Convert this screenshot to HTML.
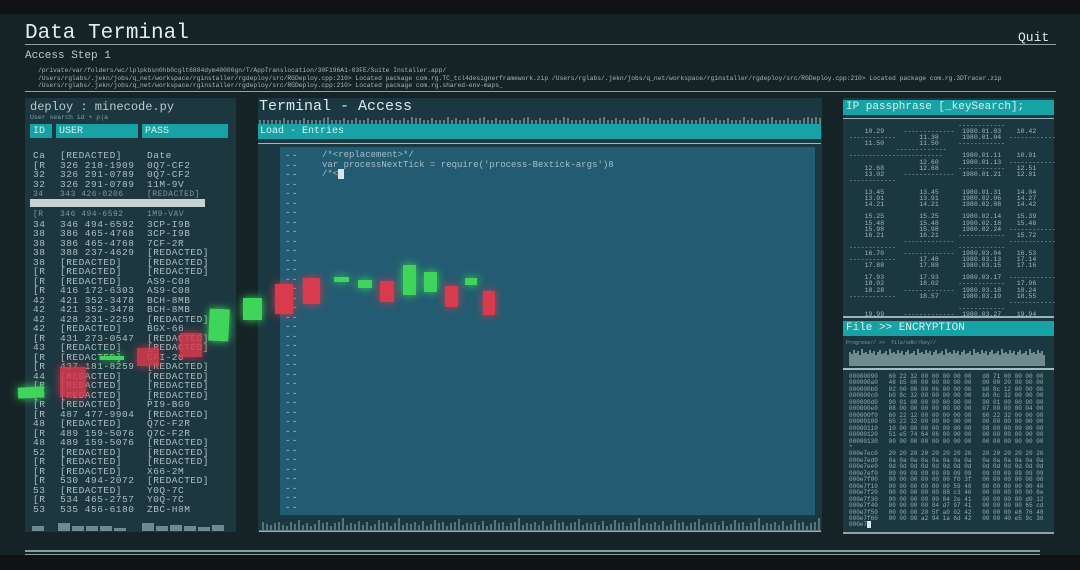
<!DOCTYPE html>
<html><head><meta charset="utf-8"><style>
*{margin:0;padding:0;box-sizing:border-box}
body{width:1080px;height:570px;overflow:hidden;background:#111213;font-family:"Liberation Mono",monospace;color:#b9c9cc;position:relative}
.a{position:absolute;white-space:pre}
#main{position:absolute;left:0;top:14px;width:1080px;height:541px;background:#152327}
.hl{position:absolute;height:1px;background:#8fa3a6}
.pan{position:absolute;background:#1c3740}
.teal{position:absolute;background:#17a3a5;color:#d8f0ef}
.c{position:absolute;box-shadow:0 0 9px currentColor}
.g{background:#3fd45a;color:#3fd45a}
.r{background:#d83a4e;color:#d83a4e}
.col{position:absolute;top:151px;font-size:9.5px;line-height:9.5px;color:#aebec1;white-space:pre;letter-spacing:0.5px}
.sm{font-size:8px;color:#7f9699}
</style></head><body>
<div id="main"></div>
<div class="a" style="left:25px;top:22px;font-size:21px;color:#e4ecec">Data Terminal</div>
<div class="hl" style="left:25px;top:44px;width:1031px"></div>
<div class="a" style="left:1018px;top:30px;font-size:13px;color:#e4ecec">Quit</div>
<div class="a" style="left:25px;top:50px;font-size:11px">Access Step 1</div>
<div class="a" style="left:38px;top:67px;font-size:6.3px;line-height:7.5px;color:#a5b6b8">/private/var/folders/wc/lplpkbsn0hb0cglt6884dym40000gn/T/AppTranslocation/30F196A1-03FE/Suite Installer.app/
/Users/rglabs/.jekn/jobs/q_net/workspace/rginstaller/rgdeploy/src/RGDeploy.cpp:210> Located package com.rg.TC_tcl4designerframework.zip /Users/rglabs/.jekn/jobs/q_net/workspace/rginstaller/rgdeploy/src/RGDeploy.cpp:210> Located package com.rg.3DTracer.zip
/Users/rglabs/.jekn/jobs/q_net/workspace/rginstaller/rgdeploy/src/RGDeploy.cpp:210> Located package com.rg.shared-env-maps_</div>
<div class="hl" style="left:25px;top:91px;width:1031px"></div>

<!-- left panel -->
<div class="pan" style="left:25px;top:98px;width:211px;height:434px"></div>
<div class="a" style="left:30px;top:100px;font-size:12px">deploy : minecode.py</div>
<div class="a" style="left:30px;top:114px;font-size:6.5px;color:#7fa0a5">User search id + p|a</div>
<div class="teal" style="left:30px;top:124px;width:22px;height:14px;font-size:10px;padding:2px 3px">ID</div>
<div class="teal" style="left:56px;top:124px;width:82px;height:14px;font-size:10px;padding:2px 3px">USER</div>
<div class="teal" style="left:142px;top:124px;width:86px;height:14px;font-size:10px;padding:2px 3px">PASS</div>
<div class="col" style="left:33px">Ca
[R
32
32
<span class="sm">34</span>

<span class="sm">[R</span>
34
38
38
38
38
[R
[R
[R
42
42
42
42
[R
43
[R
[R
44
[R
[R
[R
[R
48
[R
48
52
[R
[R
[R
53
[R
53</div>
<div class="col" style="left:60px">[REDACTED]
326 218-1909
326 291-0789
326 291-0789
<span class="sm">343 426-0206</span>

<span class="sm">346 494-6592</span>
346 494-6592
386 465-4768
386 465-4768
388 237-4629
[REDACTED]
[REDACTED]
[REDACTED]
416 172-6303
421 352-3478
421 352-3478
428 231-2259
[REDACTED]
431 273-0547
[REDACTED]
[REDACTED]
437 181-8259
[REDACTED]
[REDACTED]
[REDACTED]
[REDACTED]
487 477-9904
[REDACTED]
489 159-5076
489 159-5076
[REDACTED]
[REDACTED]
[REDACTED]
530 494-2072
[REDACTED]
534 465-2757
535 456-6180</div>
<div class="col" style="left:147px">Date
0Q7-CF2
0Q7-CF2
11M-9V
<span class="sm">[REDACTED]</span>

<span class="sm">1M9-VAV</span>
3CP-I9B
3CP-I9B
7CF-2R
[REDACTED]
[REDACTED]
[REDACTED]
AS9-C08
AS9-C08
BCH-8MB
BCH-8MB
[REDACTED]
BGX-66
[REDACTED]
[REDACTED]
CFI-20
[REDACTED]
[REDACTED]
[REDACTED]
[REDACTED]
PI9-BG9
[REDACTED]
Q7C-F2R
Q7C-F2R
[REDACTED]
[REDACTED]
[REDACTED]
X66-2M
[REDACTED]
Y0Q-7C
Y0Q-7C
ZBC-H8M</div>
<div style="position:absolute;left:30px;top:199px;width:175px;height:8px;background:#c9d2d3"></div>
<svg class="a" style="left:30px;top:520px" width="200" height="12"><g fill="#6d8a90"><rect x="2" y="6" width="12" height="5"/><rect x="28" y="3" width="12" height="8"/><rect x="42" y="6" width="12" height="5"/><rect x="56" y="6" width="12" height="5"/><rect x="70" y="6" width="12" height="5"/><rect x="84" y="8" width="12" height="3"/><rect x="112" y="3" width="12" height="8"/><rect x="126" y="6" width="12" height="5"/><rect x="140" y="5" width="12" height="6"/><rect x="154" y="6" width="12" height="5"/><rect x="168" y="7" width="12" height="4"/><rect x="182" y="5" width="12" height="6"/></g></svg>

<!-- terminal -->
<div class="pan" style="left:258px;top:98px;width:564px;height:434px;background:#1b3842"></div>
<div class="a" style="left:259px;top:98px;font-size:15px;color:#dfe8e8">Terminal - Access</div>
<svg class="a" style="left:259px;top:116px" width="562" height="9"><g stroke="#aebfc1" stroke-width="1">
<path d="M1 9V4M5 9V4M9 9V4M13 9V4M17 9V4M21 9V4M25 9V2M29 9V4M33 9V4M37 9V4M41 9V4M45 9V2M49 9V4M53 9V4M57 9V4M61 9V4M65 9V2M69 9V1M73 9V4M77 9V4M81 9V4M85 9V2M89 9V4M93 9V4M97 9V2M101 9V4M105 9V4M109 9V2M113 9V4M117 9V4M121 9V4M125 9V2M129 9V4M133 9V2M137 9V4M141 9V4M145 9V2M149 9V4M153 9V1M157 9V2M161 9V2M165 9V4M169 9V4M173 9V2M177 9V4M181 9V4M185 9V4M189 9V1M193 9V4M197 9V2M201 9V4M205 9V4M209 9V2M213 9V4M217 9V4M221 9V2M225 9V1M229 9V4M233 9V4M237 9V2M241 9V4M245 9V4M249 9V4M253 9V2M257 9V4M261 9V4M265 9V2M269 9V1M273 9V4M277 9V4M281 9V2M285 9V4M289 9V4M293 9V4M297 9V2M301 9V4M305 9V1M309 9V2M313 9V4M317 9V4M321 9V4M325 9V2M329 9V4M333 9V4M337 9V4M341 9V2M345 9V1M349 9V4M353 9V4M357 9V2M361 9V4M365 9V2M369 9V4M373 9V4M377 9V4M381 9V2M385 9V1M389 9V2M393 9V4M397 9V4M401 9V2M405 9V4M409 9V4M413 9V2M417 9V4M421 9V4M425 9V2M429 9V4M433 9V4M437 9V4M441 9V2M445 9V1M449 9V4M453 9V4M457 9V2M461 9V4M465 9V4M469 9V2M473 9V4M477 9V4M481 9V4M485 9V1M489 9V4M493 9V2M497 9V4M501 9V4M505 9V4M509 9V2M513 9V1M517 9V4M521 9V4M525 9V4M529 9V2M533 9V4M537 9V4M541 9V4M545 9V2M549 9V1M553 9V2M557 9V1M561 9V2"/></g></svg>
<div class="teal" style="left:258px;top:124px;width:563px;height:15px;font-size:10px;padding:2px 2px">Load - Entries</div>
<div class="hl" style="left:258px;top:143px;width:563px;background:#a9b9bb"></div>
<div style="position:absolute;left:280px;top:147px;width:535px;height:368px;background:#235c72"></div>
<div class="a" style="left:285px;top:151px;font-size:9.5px;line-height:9.5px;color:#a9c3cc;letter-spacing:1px">--
--
--
--
--
--
--
--
--
--
--
--
--
--
--
--
--
--
--
--
--
--
--
--
--
--
--
--
--
--
--
--
--
--
--
--
--
--</div>
<div class="a" style="left:322px;top:151px;font-size:9px;line-height:9.5px;color:#a6bdc6">/*&lt;replacement&gt;*/
var processNextTick = require('process-Bextick-args')8
/*&lt;<span style="background:#d9e4e8;color:#235c72">&nbsp;</span></div>
<svg class="a" style="left:259px;top:514px" width="562" height="18"><path d="M0 17.5H562" stroke="#9fb3b6" stroke-width="2"/><g stroke="#9aaeb1" stroke-width="1"><path d="M4 16V8M8 16V10M12 16V11M16 16V9M20 16V8M24 16V11M28 16V12M32 16V8M36 16V10M40 16V6M44 16V11M48 16V9M52 16V12M56 16V10M60 16V6M64 16V9M68 16V8M72 16V12M76 16V9M80 16V8M84 16V4M88 16V11M92 16V9M96 16V10M100 16V7M104 16V11M108 16V8M112 16V12M116 16V10M120 16V6M124 16V9M128 16V8M132 16V12M136 16V9M140 16V4M144 16V11M148 16V9M152 16V10M156 16V8M160 16V11M164 16V7M168 16V12M172 16V10M176 16V6M180 16V9M184 16V8M188 16V12M192 16V9M196 16V8M200 16V5M204 16V11M208 16V9M212 16V10M216 16V8M220 16V11M224 16V7M228 16V12M232 16V10M236 16V6M240 16V9M244 16V8M248 16V12M252 16V9M256 16V8M260 16V4M264 16V11M268 16V9M272 16V10M276 16V8M280 16V11M284 16V7M288 16V12M292 16V10M296 16V6M300 16V9M304 16V8M308 16V12M312 16V9M316 16V8M320 16V5M324 16V11M328 16V9M332 16V10M336 16V8M340 16V11M344 16V7M348 16V12M352 16V10M356 16V6M360 16V9M364 16V8M368 16V12M372 16V9M376 16V8M380 16V4M384 16V11M388 16V9M392 16V10M396 16V8M400 16V11M404 16V7M408 16V12M412 16V10M416 16V6M420 16V9M424 16V8M428 16V12M432 16V9M436 16V8M440 16V5M444 16V11M448 16V9M452 16V10M456 16V8M460 16V11M464 16V7M468 16V12M472 16V10M476 16V6M480 16V9M484 16V8M488 16V12M492 16V9M496 16V8M500 16V4M504 16V11M508 16V9M512 16V10M516 16V8M520 16V11M524 16V7M528 16V12M532 16V10M536 16V6M540 16V9M544 16V8M548 16V12M552 16V9M556 16V8M560 16V4"/></g></svg>

<!-- right top -->
<div class="pan" style="left:843px;top:98px;width:211px;height:222px;background:#1b3740"></div>
<div class="teal" style="left:843px;top:100px;width:211px;height:15px;font-size:11px;padding:1px 3px">IP passphrase [_keySearch];</div>
<div class="hl" style="left:843px;top:118px;width:211px;background:#9fb3b6"></div>
<div class="a" style="left:849px;top:123px;font-size:6.5px;line-height:6.1px;color:#a2b6b9">                            ------------
    10.29     -------------  1980.01.03    10.42
------------      11.38      1980.01.04  ------------
    11.50         11.50     ------------
            -------------
------------------------     1980.01.11    10.91
                  12.60      1980.01.13  ------------
    12.68         12.68     ------------   12.51
    13.02     -------------  1980.01.21    12.81
------------

    13.45         13.45      1980.01.31    14.04
    13.91         13.91      1980.02.06    14.27
    14.21         14.21      1980.02.08    14.42

    15.25         15.25      1980.02.14    15.39
    15.48         15.48      1980.02.18    15.48
    15.98         15.98      1980.02.24  ------------
    16.21         16.21     ------------   15.72
              -------------              ------------
------------                ------------
    16.70     -------------  1980.03.04    16.53
------------      17.48      1980.03.13    17.14
    17.88         17.88      1980.03.15    17.16

    17.93         17.93      1980.03.17  ------------
    18.02         18.02     ------------   17.96
    18.28     -------------  1980.03.18    18.24
------------      18.57      1980.03.19    18.55
                                         ------------
                            ------------
    19.99     -------------  1980.03.27    19.94</div>
<div class="hl" style="left:843px;top:316px;width:211px;background:#9fb3b6;height:2px"></div>

<!-- right bottom -->
<div class="pan" style="left:843px;top:320px;width:211px;height:213px;background:#1b3740"></div>
<div class="teal" style="left:843px;top:321px;width:211px;height:15px;font-size:11px;padding:1px 3px">File &gt;&gt; ENCRYPTION</div>
<div class="a" style="left:846px;top:340px;font-size:5px;color:#7f9a9e">Progress// &gt;&gt;  file/odb//Key//</div>
<svg class="a" style="left:848px;top:344px" width="200" height="24"><g stroke="#86a0a4" stroke-width="1.6"><path d="M2 22V8M4 22V10M6 22V6M8 22V9M10 22V7M12 22V11M14 22V5M16 22V9M18 22V8M20 22V10M22 22V6M24 22V9M26 22V7M28 22V11M30 22V8M32 22V6M34 22V10M36 22V9M38 22V7M40 22V11M42 22V5M44 22V9M46 22V8M48 22V10M50 22V6M52 22V9M54 22V7M56 22V11M58 22V8M60 22V6M62 22V10M64 22V9M66 22V7M68 22V11M70 22V5M72 22V9M74 22V8M76 22V10M78 22V6M80 22V9M82 22V7M84 22V11M86 22V8M88 22V6M90 22V10M92 22V9M94 22V7M96 22V11M98 22V5M100 22V9M102 22V8M104 22V10M106 22V6M108 22V9M110 22V7M112 22V11M114 22V8M116 22V6M118 22V10M120 22V9M122 22V7M124 22V11M126 22V5M128 22V9M130 22V8M132 22V10M134 22V6M136 22V9M138 22V7M140 22V11M142 22V8M144 22V6M146 22V10M148 22V9M150 22V7M152 22V11M154 22V5M156 22V9M158 22V8M160 22V10M162 22V6M164 22V9M166 22V7M168 22V11M170 22V8M172 22V6M174 22V10M176 22V9M178 22V7M180 22V11M182 22V5M184 22V9M186 22V8M188 22V10M190 22V6M192 22V9M194 22V7M196 22V11"/></g></svg>
<div class="hl" style="left:843px;top:368px;width:211px;background:#a9bcbe;height:2px"></div>
<div class="a" style="left:849px;top:374px;font-size:6px;line-height:6.45px;color:#93adb1">00000090   60 22 32 00 00 00 00 00   d8 71 00 00 00 00
000000a0   48 b5 00 00 00 00 00 00   00 00 20 00 00 00
000000b0   02 00 00 00 06 00 00 00   b0 8c 12 00 00 00
000000c0   b0 8c 32 00 00 00 00 00   b0 8c 32 00 00 00
000000d0   90 01 00 00 00 00 00 00   90 01 00 00 00 00
000000e0   08 00 00 00 00 00 00 00   07 00 00 00 04 00
000000f0   60 22 12 00 00 00 00 00   60 22 32 00 00 00
00000100   65 22 32 00 00 00 00 00   00 00 00 00 00 00
00000110   10 00 00 00 00 00 00 00   08 00 00 00 00 00
00000120   51 e5 74 64 06 00 00 00   00 00 00 00 00 00
00000130   00 00 00 00 00 00 00 00   00 00 00 00 00 00
*
000e7ec0   20 20 20 20 20 20 20 20   20 20 20 20 20 20
000e7ed0   0a 0a 0a 0a 0a 0a 0a 0a   0a 0a 0a 0a 0a 0a
000e7ee0   0d 0d 0d 0d 0d 0d 0d 0d   0d 0d 0d 0d 0d 0d
000e7ef0   09 09 09 09 09 09 09 09   09 09 09 09 09 09
000e7f00   00 00 00 00 00 00 f0 3f   00 00 00 00 00 00
000e7f10   00 00 00 00 00 00 59 40   00 00 00 00 00 40
000e7f20   00 00 00 00 00 88 c3 40   00 00 00 00 00 6e
000e7f30   00 00 00 00 80 84 2e 41   00 00 00 00 d0 12
000e7f40   00 00 00 00 84 d7 97 41   00 00 00 00 65 cd
000e7f50   00 00 00 20 5f a0 02 42   00 00 00 e8 76 48
000e7f60   00 00 00 a2 94 1a 6d 42   00 00 40 e5 9c 30
000e7<span style="background:#d9e4e8">&nbsp;</span></div>
<div class="hl" style="left:843px;top:532px;width:211px;background:#8fa3a6;height:2px"></div>

<!-- candles -->
<div class="c g" style="left:18px;top:387px;width:26px;height:11px;transform:rotate(-3deg)"></div>
<div class="c r" style="left:60px;top:367px;width:26px;height:30px;opacity:.85"></div>
<div class="c g" style="left:100px;top:356px;width:24px;height:4px"></div>
<div class="c r" style="left:137px;top:348px;width:22px;height:18px;opacity:.85"></div>
<div class="c r" style="left:180px;top:333px;width:22px;height:24px;opacity:.85"></div>
<div class="c g" style="left:209px;top:309px;width:20px;height:32px;transform:rotate(3deg)"></div>
<div class="c g" style="left:243px;top:298px;width:19px;height:22px"></div>
<div class="c r" style="left:275px;top:284px;width:18px;height:30px"></div>
<div class="c r" style="left:303px;top:278px;width:17px;height:26px"></div>
<div class="c g" style="left:334px;top:277px;width:15px;height:5px"></div>
<div class="c g" style="left:358px;top:280px;width:14px;height:8px"></div>
<div class="c r" style="left:380px;top:281px;width:14px;height:21px"></div>
<div class="c g" style="left:403px;top:265px;width:13px;height:30px"></div>
<div class="c g" style="left:424px;top:272px;width:13px;height:20px"></div>
<div class="c r" style="left:445px;top:286px;width:13px;height:21px"></div>
<div class="c g" style="left:465px;top:278px;width:12px;height:7px"></div>
<div class="c r" style="left:483px;top:291px;width:12px;height:24px"></div>

<div class="hl" style="left:25px;top:550px;width:1015px;height:2px;background:#8a9ea1"></div>
<div class="hl" style="left:25px;top:554px;width:1015px;height:1px;background:#8a9ea1"></div>
</body></html>
